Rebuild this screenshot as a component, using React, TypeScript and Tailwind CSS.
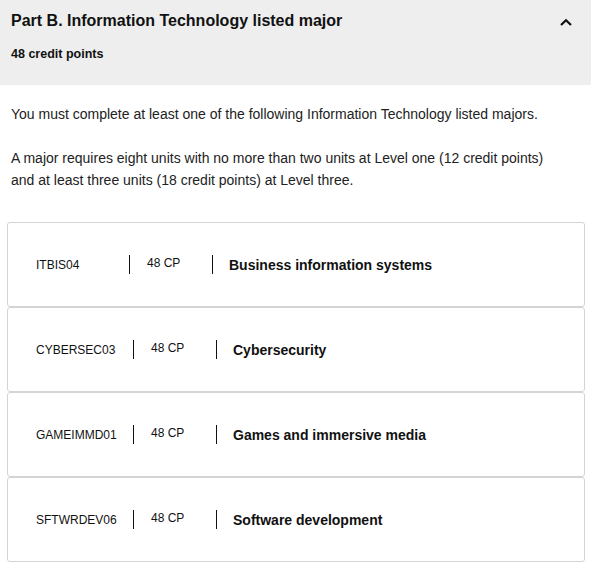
const majors = [
  { code: 'ITBIS04', cp: '48 CP', title: 'Business information systems', codeW: 'w-[93px]' },
  { code: 'CYBERSEC03', cp: '48 CP', title: 'Cybersecurity', codeW: 'w-[97px]' },
  { code: 'GAMEIMMD01', cp: '48 CP', title: 'Games and immersive media', codeW: 'w-[97px]' },
  { code: 'SFTWRDEV06', cp: '48 CP', title: 'Software development', codeW: 'w-[97px]' },
];

export default function App() {
  return (
    <div className="w-[591px] min-h-[571px] bg-white font-['Liberation_Sans',Arial,sans-serif] text-[#111]">
      <div className="h-[85px] bg-[#eeeeee] pl-[11px] pr-[18px] pt-[10px]">
        <div className="flex items-center justify-between">
          <h2 className="text-[16px] leading-[22px] font-bold">Part B. Information Technology listed major</h2>
          <svg width="14" height="9" viewBox="0 0 14 9" className="mt-[2px]">
            <path d="M2 7 L7 2.2 L12 7" fill="none" stroke="#111" strokeWidth="2.2" />
          </svg>
        </div>
        <p className="mt-[14px] text-[12.5px] leading-[16px] font-bold">48 credit points</p>
      </div>

      <div className="px-[11px] pt-[18px] text-[14px] leading-[22px] text-[#222]">
        <p>You must complete at least one of the following Information Technology listed majors.</p>
        <p className="mt-[22px]">
          A major requires eight units with no more than two units at Level one (12 credit points)
          <br />
          and at least three units (18 credit points) at Level three.
        </p>
      </div>

      <div className="mx-[7px] mt-[31px] w-[578px]">
        {majors.map((m) => (
          <div
            key={m.code}
            className="h-[85px] flex items-center border border-[#d4d4d4] rounded-[3px] pl-[28px] text-[12px]"
          >
            <div className={`${m.codeW} leading-[18px]`}>{m.code}</div>
            <div className="h-[19px] w-px bg-[#111]" />
            <div className="w-[82px] pl-[17px] leading-[18px] -mt-[3px]">{m.cp}</div>
            <div className="h-[19px] w-px bg-[#111]" />
            <div className="pl-[16px] text-[14px] font-bold leading-[18px]">{m.title}</div>
          </div>
        ))}
      </div>
    </div>
  );
}
